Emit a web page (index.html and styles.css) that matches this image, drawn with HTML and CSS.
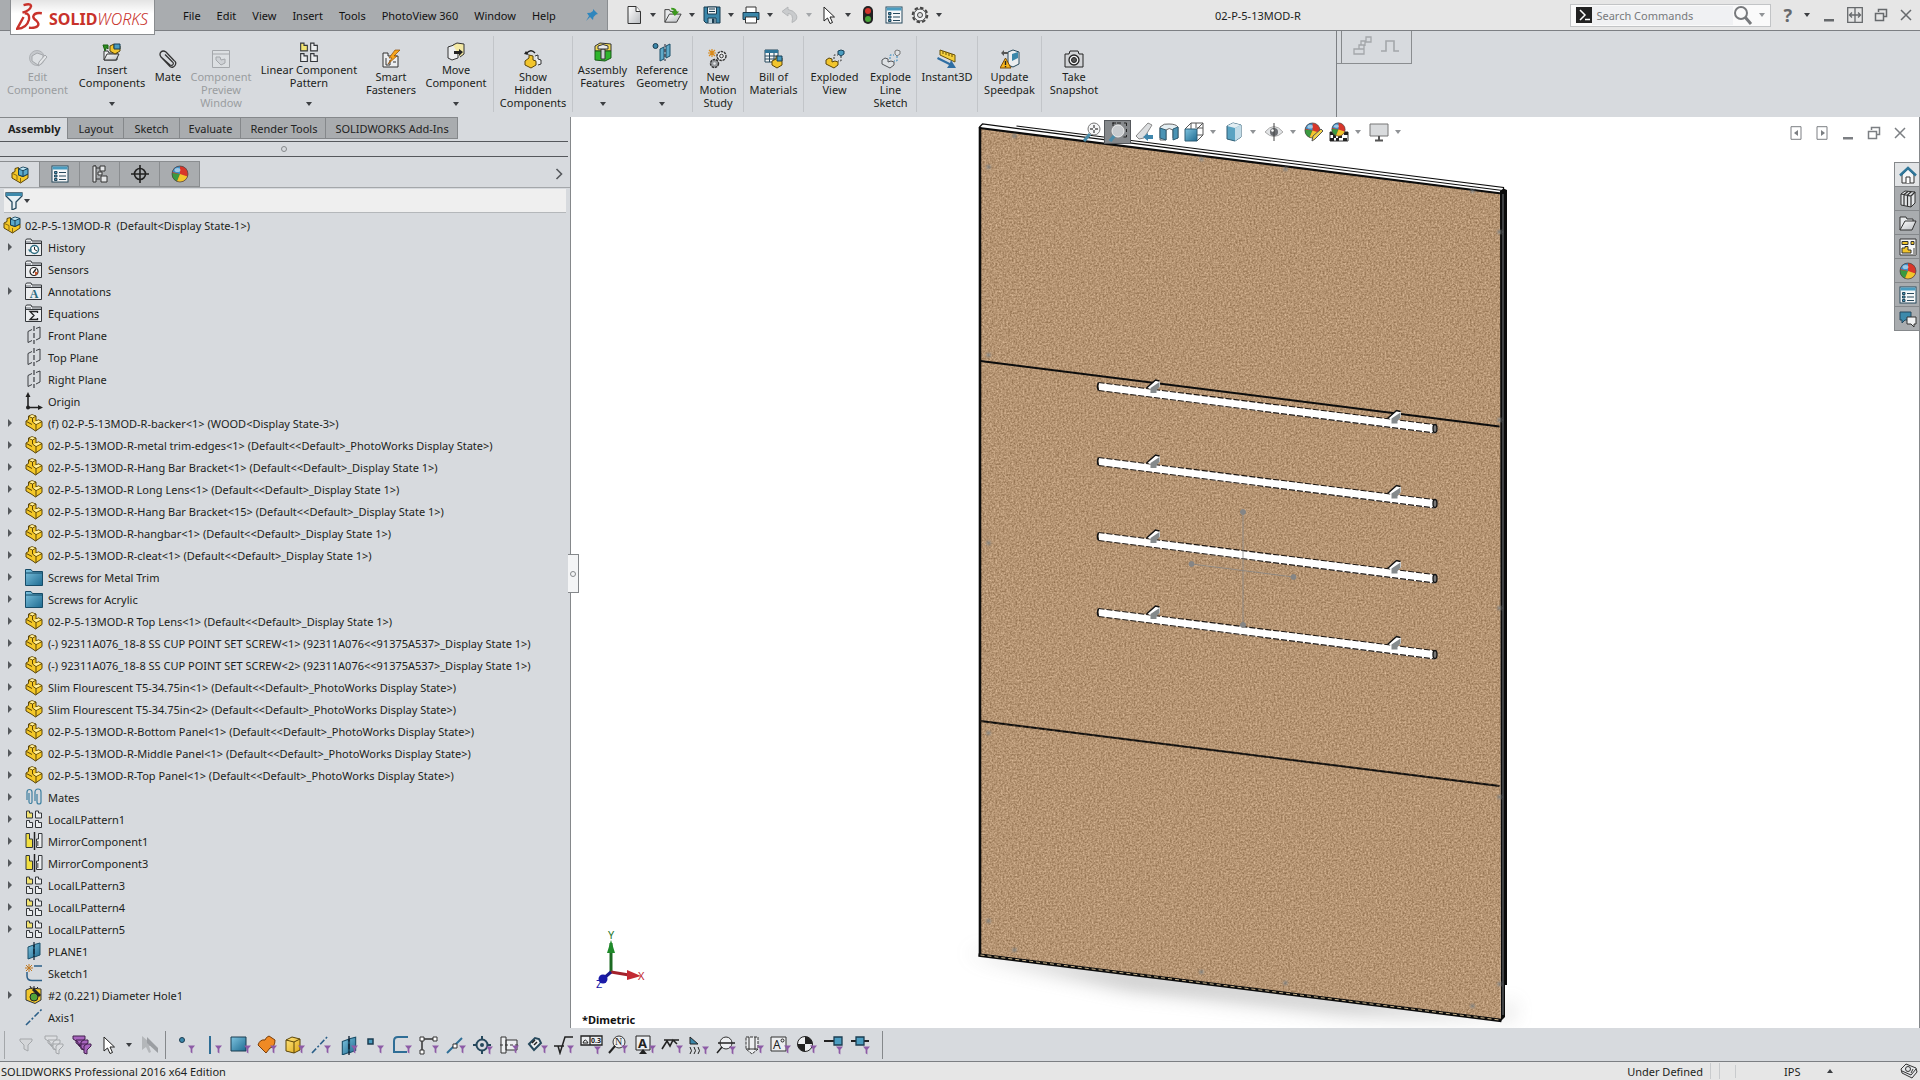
FILE: index.html
```html
<!DOCTYPE html>
<html lang="en">
<head>
<meta charset="utf-8">
<title>02-P-5-13MOD-R - SOLIDWORKS</title>
<link rel="stylesheet" href="styles.css">
</head>
<body>
<svg class="defs" aria-hidden="true">
<defs>
<linearGradient id="blue" x1="0" y1="0" x2="1" y2="1"><stop offset="0" stop-color="#7fc4e0"/><stop offset="1" stop-color="#1d6a90"/></linearGradient>
<linearGradient id="page" x1="0" y1="0" x2="1" y2="1"><stop offset="0" stop-color="#fff"/><stop offset="1" stop-color="#b9bcc0"/></linearGradient>
<linearGradient id="gold" x1="0" y1="0" x2="1" y2="1"><stop offset="0" stop-color="#ffe680"/><stop offset="1" stop-color="#e0a818"/></linearGradient>
<symbol id="part" viewBox="0 0 18 18"><path d="M3.500 5.500V2l3.500-1.300L11 2v5l2.500-1.200L17 7.500v5L10.500 17 7 14.500 1 11V7z" fill="#f4c828" stroke="#5b4508"/><path d="M4 2.500 7.500 4v4L11 10.500 17 7.500M7.500 4 11 2M11 10.500V17M1.500 7.500 7 10.500" fill="none" stroke="#5b4508"/><path d="M7 1 10 2 7.500 3.500 4.500 2.300zM8.500 8 13.500 6.500 16 7.500 11.200 10z" fill="#fff0a0"/></symbol>
<symbol id="assembly" viewBox="0 0 18 18"><path d="M1 7 4 5.500V2.500L7.500 1.500V9L12 10.500 17 8V12L9.500 17 1 12z" fill="#f4c828" stroke="#5b4508"/><path d="M1.500 7.500 6 9.500V14M9.500 12v5" fill="none" stroke="#8b6a10"/><path d="M7.500 3 12 1l5 1.500V8L12 10.500 7.500 9z" fill="#5aa9cb" stroke="#173f56"/><path d="M7.500 3 12 4.500 17 2.500M12 4.500v6" fill="none" stroke="#173f56"/><path d="M8.500 3 12 1.600l3.700 1L12 4z" fill="#c4e6f2"/></symbol>
<symbol id="folderbox" viewBox="0 0 18 18"><path d="M.5 17.500V2.500L1.500 1H6l1 2h9.500V17.500z" fill="#eceef0" stroke="#33363a"/><path d="M.5 5.500h16" stroke="#33363a"/><path d="M1 3h5v2H1zM7 4h9v1H7z" fill="#a9adb2"/></symbol>
<symbol id="history" viewBox="0 0 18 18"><use href="#folderbox"/><circle cx="9.500" cy="11.500" r="4" fill="#fff" stroke="#2d6c80" stroke-width="1.500"/><path d="M9.500 9v2.500L12 13" fill="none" stroke="#222"/><path d="M3 11.500h4L5 14.500z" fill="#2d6c80"/></symbol>
<symbol id="sensors" viewBox="0 0 18 18"><use href="#folderbox"/><circle cx="9" cy="11.500" r="4" fill="#fff" stroke="#222" stroke-width="1.200"/><path d="M8 13 11 9" stroke="#222" stroke-width="1.300"/><path d="M10 15.500a4 4 0 0 0 3-3l-3-1z" fill="#c8552c"/></symbol>
<symbol id="annot" viewBox="0 0 18 18"><use href="#folderbox"/><text x="9" y="16" text-anchor="middle" font-family="Liberation Serif, serif" font-size="12" font-weight="700" fill="#2d6c80">A</text></symbol>
<symbol id="equations" viewBox="0 0 18 18"><use href="#folderbox"/><path d="M12.500 9V7.500H5l4 4-4 4h7.500V14" fill="none" stroke="#222" stroke-width="1.300"/></symbol>
<symbol id="plane" viewBox="0 0 18 18"><path d="M7 3.500 3 5.500v11l4-2M11 2.500 15 1v11l-4 2" fill="none" stroke="#3a3d41"/><path d="M9 0v18" stroke="#3a3d41" stroke-width="1.200" stroke-dasharray="5 2"/></symbol>
<symbol id="planeblue" viewBox="0 0 18 18"><path d="M3 5 8.500 3v12L3 17zM9.500 2.500 15 1v12l-5.500 2z" fill="url(#blue)" stroke="#1b4f69"/><path d="M9 0v18" stroke="#123" stroke-width="1.200" stroke-dasharray="5 2"/></symbol>
<symbol id="origin" viewBox="0 0 18 18"><path d="M3 3v12.500h12" fill="none" stroke="#222" stroke-width="1.600"/><path d="M3 0 5.500 5H.5zM18 15.500 13 13v5z" fill="#222"/><circle cx="3" cy="15.500" r="2" fill="#222"/></symbol>
<symbol id="folderblue" viewBox="0 0 18 18"><path d="M.5 17.500V1.500H6L7.500 3.500h10v14z" fill="url(#blue)" stroke="#174c68"/><path d="M1 5h16" stroke="#174c68"/></symbol>
<symbol id="mates" viewBox="0 0 18 18"><path d="M2 12V4a2.500 2.500 0 0 1 5 0v10a1.500 1.500 0 0 1-3 0V5M10 13V4a3 3 0 0 1 6 0v10a2 2 0 0 1-4 0V6" fill="none" stroke="#3d7fa0" stroke-width="1.200"/></symbol>
<symbol id="pattern" viewBox="0 0 18 18"><g stroke="#33363a" fill="#eceef0"><path d="M1.500 1h3v2h3v5h-6z" fill="#f2e472"/><path d="M10.500 1h3v2h3v5h-6zM1.500 10.500h3v2h3v5h-6zM10.500 10.500h3v2h3v5h-6z"/></g></symbol>
<symbol id="mirror" viewBox="0 0 18 18"><path d="M1 1.500h3.500V7H7.500v8.500H1z" fill="#f2e040" stroke="#33363a"/><path d="M17 1.500h-3.500V7h-2v8.500H17z" fill="#eceef0" stroke="#33363a"/><path d="M11.500 9h2v5h-2z" fill="#777"/><path d="M9.500 0v18" stroke="#222" stroke-width="1.500"/></symbol>
<symbol id="sketch" viewBox="0 0 18 18"><path d="M9 2h8M2 8v4q0 4.500 5 4.500h10" fill="none" stroke="#2b5f88" stroke-width="1.500"/><path d="M4 0v8M0 4h8M1 1l6 6M7 1 1 7" stroke="#c07820"/></symbol>
<symbol id="hole" viewBox="0 0 18 18"><path d="M1 4 6 2l10 1v11l-6 3.500L1 14z" fill="#f0c62c" stroke="#33363a"/><circle cx="9" cy="11" r="4" fill="#51a33a" stroke="#222"/><path d="m8 3 7 7" stroke="#222" stroke-width="3"/><path d="m5 0 1.500 3M9 0v3M13 1l-2 2" stroke="#222"/></symbol>
<symbol id="axis" viewBox="0 0 18 18"><path d="M1 17 17 1" stroke="#2b5f88" stroke-width="1.600" stroke-dasharray="6 2 2 2"/></symbol>
<symbol id="ball" viewBox="0 0 18 18"><circle cx="9" cy="9" r="8" fill="#d8362a"/><path d="M9 9V1a8 8 0 0 0-7.800 6z" fill="#3c8fc8"/><path d="M9 9 1 8a8 8 0 0 0 5 8.400z" fill="#3a9a40"/><path d="M9 9 6 16.400a8 8 0 0 0 10.500-5z" fill="#f2c52c"/><ellipse cx="6.500" cy="5" rx="3" ry="2" fill="#fff" opacity=".5"/><circle cx="9" cy="9" r="8" fill="none" stroke="#444" stroke-width=".7"/></symbol>
<symbol id="list" viewBox="0 0 18 18"><rect x="1" y="1" width="16" height="16" fill="#f6f7f8" stroke="#26485c"/><path d="M1.500 1.500h15v3h-15z" fill="#4a9cc0"/><path d="M3.500 6.500h2.500v2H3.500zM3.500 10h2.500v2H3.500zM3.500 13.500h2.500v2H3.500z" fill="#4a9cc0" stroke="#26485c"/><path d="M8 7.500h7M8 11h7M8 14.500h7" stroke="#26485c"/></symbol>
<symbol id="config" viewBox="0 0 18 18"><path d="M4 0v17M4 3h5M4 14h5M8 9h3" fill="none" stroke="#333"/><path d="M2 1h3v16H2zM9 1h5v5H9zM10 11h6v6h-6zM7 7h4v3H7z" fill="#e4e6e8" stroke="#333"/></symbol>
<symbol id="target" viewBox="0 0 18 18"><circle cx="9" cy="9" r="5.500" fill="none" stroke="#222" stroke-width="1.600"/><path d="M9 0v18M0 9h18" stroke="#222" stroke-width="1.600"/></symbol>
<symbol id="funnel" viewBox="0 0 18 18"><path d="M1 1h16v3l-6 6v6l-4 2v-8L1 4z" fill="#e8f0f4" stroke="#24495e" stroke-width="1.300"/><path d="M1 1h16v3H1z" fill="#3d8aac"/></symbol>
<symbol id="new" viewBox="0 0 18 18"><path d="M3 .5h8l4.500 5v12H3z" fill="url(#page)" stroke="#333"/><path d="M11 .5V5.500h4.500" fill="#fff" stroke="#333"/></symbol>
<symbol id="open" viewBox="0 0 20 18"><path d="M1 17V3h5l1 2h7v4" fill="#e7e9eb" stroke="#333"/><path d="M1 17 6 8h13l-5 9z" fill="url(#page)" stroke="#333"/><path d="M8 1q6 0 6 4h3l-5 5-4-5h3q0-2-3-2z" fill="#3c9a1e"/></symbol>
<symbol id="save" viewBox="0 0 18 18"><path d="M1 1h16v16H3l-2-2z" fill="#3b87aa" stroke="#1b3c50"/><path d="M4.500 1h9v7h-9z" fill="#eef2f4" stroke="#1b3c50"/><path d="M6 3h6M6 5.500h6M5 17v-5h8v5" stroke="#1b3c50" fill="#b6cfda"/><path d="M9 12.500h2.500V17H9z" fill="#1b3c50"/></symbol>
<symbol id="print" viewBox="0 0 18 18"><path d="M4 7V1h10v6" fill="#fff" stroke="#333"/><path d="M1 6.500h16v7H1z" fill="#3b87aa" stroke="#1b3c50"/><path d="M3.500 11h11v6h-11z" fill="#fff" stroke="#333"/></symbol>
<symbol id="undo" viewBox="0 0 18 18"><path d="M7 1 1 5.500 7 10V7.500q6 0 4 9 7-3 4-8-2-4-8-5z" fill="#c9cbcd" stroke="#b5b7b9"/></symbol>
<symbol id="cursor" viewBox="0 0 12 18"><path d="M1 1v14l3.500-3 2.500 5.500 2.500-1L7 11h4.500z" fill="#fff" stroke="#222"/></symbol>
<symbol id="traffic" viewBox="0 0 18 18"><rect x="4" y="0" width="10" height="18" rx="5" fill="#222"/><circle cx="9" cy="5" r="3" fill="#d3342c"/><circle cx="9" cy="13" r="3" fill="#4aa63a"/></symbol>
<symbol id="gear" viewBox="0 0 18 18"><circle cx="9" cy="9" r="7.300" fill="none" stroke="#444" stroke-width="2" stroke-dasharray="3.500 2.200"/><circle cx="9" cy="9" r="6" fill="#f0f1f2" stroke="#444"/><circle cx="9" cy="9" r="2.500" fill="#e4e5e6" stroke="#444"/></symbol>
<symbol id="pin" viewBox="0 0 14 14"><path d="m8 1 5 5-2 .5-2.500 2.500L8 12 5 9 1 13l3-5-2-3 3.500-.3L8 3z" fill="#2f86bd"/></symbol>
<symbol id="clip" viewBox="0 0 20 20"><path d="m4 9 8 8.500q3 2 5-1t-1-5L8 3Q5 1 3 3T3 8l9 8q2 1 3-.5t-.5-2.500L7 5.500" fill="none" stroke="#333" stroke-width="1.300"/></symbol>
<symbol id="editcomp" viewBox="0 0 20 20"><circle cx="9" cy="9" r="7.500" fill="#c5c8cc" stroke="#b0b3b7"/><path d="M4 12V7l5-3 6 2v6l-5 4z" fill="#dde0e3" stroke="#a4a7ab"/><path d="m10 17 1-4 6-7 2 2-6 7z" fill="#e4e6e8" stroke="#a4a7ab"/></symbol>
<symbol id="insert" viewBox="0 0 20 20"><path d="M2 18V9h4l1 2h8v7z" fill="#eceef0" stroke="#333"/><path d="m2 18 3-6h12l-3 6z" fill="url(#page)" stroke="#333"/><path d="M1 3h5v4L4.500 5.500 3 9Z" fill="#2d9020" stroke="#1b6012"/><path d="M8 4l4-2v4l6-2v5l-5 3-5-3z" fill="#f2c52c" stroke="#5b4508"/><path d="M12 2h6v5h-6z" fill="#4a9cc0" stroke="#173f56"/></symbol>
<symbol id="preview" viewBox="0 0 20 20"><path d="M1.500 1.500h17v17h-17zM1.500 5h17" fill="#dcdfe2" stroke="#a4a7ab"/><path d="M5 11V8h4l1 3 4-1v4l-4 2z" fill="#cfd2d6" stroke="#a4a7ab"/></symbol>
<symbol id="fasten" viewBox="0 0 20 20"><path d="M2 18V4h5v3h10v11z" fill="#eceef0" stroke="#333"/><path d="M5 9v7h4v-5M12 13h3" fill="none" stroke="#333"/><path d="m14 1-6 8h3l-4 6 9-8h-3l6-6z" fill="#f7a51c" stroke="#8a4a08" stroke-width=".7"/></symbol>
<symbol id="move" viewBox="0 0 20 20"><path d="M2 5 8 3l4 1v12l-6 2-4-2z" fill="#eceef0" stroke="#333"/><path d="m7 3 4-2 7 1v10l-4 3" fill="#f4e9a4" stroke="#333"/><path d="M8 9h5V7l4 3-4 4v-2H8z" fill="#222"/></symbol>
<symbol id="show" viewBox="0 0 20 20"><path d="M2 12 6 9v-3l4 1v4l3 1v4l-5 3-6-3z" fill="#f2c52c" stroke="#5b4508"/><path d="M12 7l3-1v4l3 1v4l-3 1" fill="#eceef0" stroke="#333"/><path d="M3 5q5-6 9-1" fill="none" stroke="#222" stroke-width="1.300"/><path d="m1 5 5 1-3-4z" fill="#222"/></symbol>
<symbol id="asmfeat" viewBox="0 0 20 20"><path d="M2 4 7 1l11 1v7H2z" fill="#f0d957" stroke="#333"/><path d="M2 9h16v7l-6 3-10-1z" fill="#2fb52c" stroke="#1a5a18"/><path d="M8 7h4v10H8z" fill="#cfd2d6" stroke="#333"/><path d="M5 4q5-3 10 0v3H5z" fill="#e8eaec" stroke="#333"/></symbol>
<symbol id="refgeo" viewBox="0 0 20 20"><circle cx="3.500" cy="4" r="2.500" fill="#3b87aa" stroke="#1b3c50"/><path d="m8 7 4-2v12l-4 2zM14 4l4-2v12l-4 2z" fill="#5fa9c9" stroke="#1b4f69"/><path d="M13 2v17" stroke="#223" stroke-dasharray="3 2"/></symbol>
<symbol id="motion" viewBox="0 0 20 20"><path d="M4 0v8M0 4h8M1 1l6 6M7 1 1 7" stroke="#d88a1c" stroke-width="1.200"/><circle cx="13.500" cy="7" r="4.500" fill="#eceef0" stroke="#333" stroke-width="1.400" stroke-dasharray="2.500 .8"/><circle cx="13.500" cy="7" r="1.800" fill="none" stroke="#333"/><circle cx="6.500" cy="14.500" r="4" fill="#999ca0" stroke="#333" stroke-width="1.400" stroke-dasharray="2.500 .8"/><circle cx="6.500" cy="14.500" r="1.200" fill="#e4e6e8"/></symbol>
<symbol id="bom" viewBox="0 0 20 20"><path d="M1 1h13v12H1z" fill="#f4f5f6" stroke="#26485c"/><path d="M1 1h13v3H1z" fill="#2f7699"/><path d="M1 7h13M1 10h13M5.500 4v9M10 4v9" stroke="#26485c"/><path d="m8 12 4-2V7l6 2v7l-5 3-5-3z" fill="#f2c52c" stroke="#5b4508"/><path d="M13 7h5v5h-5z" fill="#4a9cc0" stroke="#173f56"/></symbol>
<symbol id="explode" viewBox="0 0 20 20"><path d="M1 11 4 9l3 1v3l3-1 3 1v3l-4 3-8-4z" fill="#f2c52c" stroke="#5b4508"/><path d="m13 2 3-1 3 1v3l-3 2-3-2z" fill="#4a9cc0" stroke="#173f56"/><path d="M9 10V6h4M16 7v5h-3" fill="none" stroke="#333" stroke-dasharray="2 1.500"/></symbol>
<symbol id="expline" viewBox="0 0 20 20"><path d="M1 11 4 9l3 1v3l3-1 3 1v3l-4 3-8-4z" fill="#dfe2e5" stroke="#55585c"/><path d="m14 2 2-1 3 1v3l-3 2-2-2z" fill="#dfe2e5" stroke="#777"/><path d="M9 10V6h4M16 7v5h-3" fill="none" stroke="#2f86bd" stroke-dasharray="2 1.500"/></symbol>
<symbol id="instant" viewBox="0 0 20 20"><path d="m3 1 15 5v7L3 6z" fill="#f4cf3c" stroke="#6b5208"/><path d="M6 2v3M9 3v3M12 4v3M15 5v3" stroke="#6b5208"/><path d="m0 10 1-2 12 6 1-3 5 8h-9l2-3z" fill="#2f6ea3"/></symbol>
<symbol id="speedpak" viewBox="0 0 20 20"><path d="m8 3 5-2 6 2v12l-6 3-5-2z" fill="#eceef0" stroke="#26485c"/><path d="m12 5 6-2v6l-6 3z" fill="#3b87aa"/><path d="M4 1 1 4l3 3V5h4V3H4z" fill="#555"/><path d="m5.500 9 5.500 10H0z" fill="#f7b51c" stroke="#7a4a08"/><path d="M5.500 12v4M5.500 17v1.300" stroke="#222" stroke-width="1.400"/></symbol>
<symbol id="camera" viewBox="0 0 20 20"><path d="M1 5h4l1-3h8l1 3h4v13H1z" fill="#d2d4d7" stroke="#222"/><circle cx="10" cy="11" r="5" fill="#f0f1f2" stroke="#222" stroke-width="1.300"/><circle cx="10" cy="11" r="2.500" fill="#555" stroke="#222"/></symbol>
<symbol id="glass" viewBox="0 0 20 20"><circle cx="8" cy="8" r="6" fill="none" stroke="#77797c" stroke-width="2"/><path d="m12 12 6 7" stroke="#77797c" stroke-width="3"/></symbol>
<symbol id="cube" viewBox="0 0 20 20"><path d="m3 4 6-3 8 2v12l-6 4-8-2z" fill="#5aa3c2" stroke="#2e5d74"/><path d="m3 4 8 2 6-3-8-2z" fill="#e2edf2"/><path d="M11 6v13l6-4V3z" fill="#c2dce8"/></symbol>
<symbol id="wirecube" viewBox="0 0 20 20"><path d="M7 7V1h12v12h-6M1 7l6-6M13 7l6-6M13 19l6-6M12 1v5M19 6h-6" fill="none" stroke="#555"/><path d="M1 7h12v12H1z" fill="url(#blue)" stroke="#2e5d74"/></symbol>
<symbol id="eye" viewBox="0 0 20 20"><path d="M1 10q9-11 18 0-9 9-18 0z" fill="#e2e4e6" stroke="#aaa"/><circle cx="10" cy="10" r="4" fill="#6b6e72"/><path d="M10 1v18" stroke="#444"/><circle cx="8.500" cy="8.500" r="1.300" fill="#fff"/></symbol>
<symbol id="monitor" viewBox="0 0 20 20"><path d="M1 2h18v12H1z" fill="#d9dbdd" stroke="#777"/><path d="M10 14v4M6 18.500h8" stroke="#555" stroke-width="2"/></symbol>
<symbol id="zoomfit" viewBox="0 0 20 20"><path d="M8 12 2 19" stroke="#4a8ba8" stroke-width="3"/><circle cx="12" cy="7" r="6" fill="#f4f5f6" stroke="#777"/><path d="M12 3v3M12 8v3M8 7h3M13 7h3" stroke="#555" stroke-width="1.400"/></symbol>
<symbol id="zoomarea" viewBox="0 0 20 20"><path d="M6 1H4M9 1h4M16 1h2.500v3M18.500 7v3M18.500 13v2h-3M8 1H5v3" fill="none" stroke="#222"/><path d="m7 13-5 6" stroke="#4a8ba8" stroke-width="3.500"/><circle cx="10" cy="9" r="6" fill="#c8cbce" stroke="#eee"/></symbol>
<symbol id="prev" viewBox="0 0 20 20"><path d="M14 1l4 2-8 13-5 1-3-3z" fill="#dcdee0" stroke="#888"/><path d="M9 15l5-4v2h5v4h-5v2z" fill="#3f86ac"/></symbol>
<symbol id="section" viewBox="0 0 20 20"><path d="M1 5q4-4 9-3 7 0 9 3v11h-5V8q-4-3-7 0v10H1z" fill="#e4eef2" stroke="#666"/><path d="M1 6l6 2v10l-6-2zM14 7l5-2v11l-5 2z" fill="#4a93b4" stroke="#2e5d74"/></symbol>
<symbol id="scene" viewBox="0 0 20 20"><path d="M1 10h18v9H1z" fill="#fff" stroke="#333"/><path d="M1 10h4v3H1zM9 13h4v3H9zM15 10h4v3h-4zM4 13h3v3H4zM1 16h4v3H1zM7 16h3v3H7zM14 16h4v3h-4z" fill="#222"/><svg x="2" y="0" width="15" height="15"><use href="#ball"/></svg></symbol>
<symbol id="appear" viewBox="0 0 20 20"><svg x="0" y="0" width="17" height="17"><use href="#ball"/></svg><path d="m8 19 1-5 8-7 2 2-8 8z" fill="#f4d34c" stroke="#555"/></symbol>
<symbol id="pf" viewBox="0 0 8 9"><path d="M0 0h8L5 3.500V9L3 7.500v-4z" fill="#8d5ba6"/></symbol>
<symbol id="restore" viewBox="0 0 14 14"><path d="M4.500 4V1.500h8v7H10M1.500 5.500h8v7h-8z" fill="none" stroke="currentColor" stroke-width="1.500"/></symbol>
<symbol id="close" viewBox="0 0 14 14"><path d="m2 2 10 10M12 2 2 12" stroke="currentColor" stroke-width="1.500"/></symbol>
<symbol id="min" viewBox="0 0 14 14"><path d="M2 11h10v2.500H2z" fill="currentColor"/></symbol>
<symbol id="mark" viewBox="-5 -5 10 10"><path d="M0-4V4M-4 0H4M-3-3 3 3M3-3-3 3" stroke="#7c8284" stroke-width="1"/></symbol>
</defs>
</svg>
<div class="app">
<header class="titlebar">
 <nav class="menus">
  <a class="menu" href="#">File</a><a class="menu" href="#">Edit</a><a class="menu" href="#">View</a><a class="menu" href="#">Insert</a><a class="menu" href="#">Tools</a><a class="menu" href="#">PhotoView 360</a><a class="menu" href="#">Window</a><a class="menu" href="#">Help</a>
  <button class="bare pin" aria-label="Pin menu"><svg class="i14"><use href="#pin"/></svg></button>
 </nav>
 <div class="quick">
  <button class="split"><svg class="i18"><use href="#new"/></svg><i class="caret"></i></button>
  <button class="split"><svg class="i18"><use href="#open"/></svg><i class="caret"></i></button>
  <button class="split"><svg class="i18"><use href="#save"/></svg><i class="caret"></i></button>
  <button class="split"><svg class="i18"><use href="#print"/></svg><i class="caret"></i></button>
  <button class="split faded"><svg class="i18"><use href="#undo"/></svg><i class="caret"></i></button>
  <button class="split"><svg class="i18"><use href="#cursor"/></svg><i class="caret"></i></button>
  <button class="bare solo"><svg class="i18"><use href="#traffic"/></svg></button>
  <button class="bare solo"><svg class="i18"><use href="#list"/></svg></button>
  <button class="split"><svg class="i18"><use href="#gear"/></svg><i class="caret"></i></button>
 </div>
 <h1 class="doc">02-P-5-13MOD-R</h1>
 <div class="title-end">
  <form class="search"><svg class="i16" viewBox="0 0 16 16"><path d="M0 0h16v16H0z" fill="#222"/><path d="m4 3 5 5-5 5M9 12.500h5" fill="none" stroke="#fff" stroke-width="1.500"/></svg><input type="text" aria-label="Search Commands" placeholder="Search Commands"><button class="bare" type="button" aria-label="Search"><svg class="i20"><use href="#glass"/></svg></button><i class="caret soft"></i></form>
  <button class="help">?<i class="caret"></i></button>
  <div class="winbtns wide"><button class="bare"><svg class="i14"><use href="#min"/></svg></button><button class="bare"><svg class="i16" viewBox="0 0 16 16"><path d="M.7.700h14.600v14.600H.7zM8 0v16M3 8h10M5 5.500 2.500 8 5 10.500M11 5.500 13.500 8 11 10.500" fill="none" stroke="currentColor" stroke-width="1.300"/></svg></button><button class="bare"><svg class="i14"><use href="#restore"/></svg></button><button class="bare"><svg class="i14"><use href="#close"/></svg></button></div>
 </div>
 <div class="logo"><svg class="ds" viewBox="0 0 26 26"><g fill="none" stroke="#c8322b" stroke-width="2.200"><path d="M7 2q7-2 7 1-1 4-8 6"/><path d="M8 9.500q5 0 4 6-2 8-11 8.500L7 13"/><path d="M24 9.500q-7-1-8 3 0 2 3 4 3 3 1 5t-8 1.500"/></g></svg><span class="logo-text"><b>SOLID</b><em>WORKS</em></span></div>
</header>

<div class="ribbon-row">
 <div class="ribbon">
  <button class="cmd faded"><svg class="i20"><use href="#editcomp"/></svg><span>Edit<br>Component</span></button>
  <button class="cmd drop"><svg class="i20"><use href="#insert"/></svg><span>Insert<br>Components</span><i class="caret"></i></button>
  <button class="cmd"><svg class="i20"><use href="#clip"/></svg><span>Mate</span></button>
  <button class="cmd faded"><svg class="i20"><use href="#preview"/></svg><span>Component<br>Preview<br>Window</span></button>
  <button class="cmd drop"><svg class="i20"><use href="#pattern"/></svg><span>Linear Component<br>Pattern</span><i class="caret"></i></button>
  <button class="cmd"><svg class="i20"><use href="#fasten"/></svg><span>Smart<br>Fasteners</span></button>
  <button class="cmd drop end"><svg class="i20"><use href="#move"/></svg><span>Move<br>Component</span><i class="caret"></i></button>
  <button class="cmd end"><svg class="i20"><use href="#show"/></svg><span>Show<br>Hidden<br>Components</span></button>
  <button class="cmd drop"><svg class="i20"><use href="#asmfeat"/></svg><span>Assembly<br>Features</span><i class="caret"></i></button>
  <button class="cmd drop end"><svg class="i20"><use href="#refgeo"/></svg><span>Reference<br>Geometry</span><i class="caret"></i></button>
  <button class="cmd end"><svg class="i20"><use href="#motion"/></svg><span>New<br>Motion<br>Study</span></button>
  <button class="cmd end"><svg class="i20"><use href="#bom"/></svg><span>Bill of<br>Materials</span></button>
  <button class="cmd"><svg class="i20"><use href="#explode"/></svg><span>Exploded<br>View</span></button>
  <button class="cmd end"><svg class="i20"><use href="#expline"/></svg><span>Explode<br>Line<br>Sketch</span></button>
  <button class="cmd end"><svg class="i20"><use href="#instant"/></svg><span>Instant3D</span></button>
  <button class="cmd end"><svg class="i20"><use href="#speedpak"/></svg><span>Update<br>Speedpak</span></button>
  <button class="cmd"><svg class="i20"><use href="#camera"/></svg><span>Take<br>Snapshot</span></button>
 </div>
 <div class="floatbar"><svg class="i20" viewBox="0 0 20 20"><path d="M1 13h5v-4h5v4M1 13v5h10v-5zM8 9V5h4v5M13 1h5v5h-5z" fill="none" stroke="#a4a7aa" stroke-width="1.300"/></svg><svg class="i20" viewBox="0 0 20 20"><path d="M1 15h5V5h8v10h5" fill="none" stroke="#a4a7aa" stroke-width="1.600"/></svg></div>
</div>

<main class="work">
 <aside class="side">
  <div class="tabs"><button class="tab active">Assembly</button><button class="tab">Layout</button><button class="tab">Sketch</button><button class="tab snug">Evaluate</button><button class="tab snug">Render Tools</button><button class="tab snug">SOLIDWORKS Add-Ins</button></div>
  <div class="gripbar"><i class="dot"></i></div>
  <div class="mgr"><button class="mtab active" aria-label="Feature tree"><svg class="i18"><use href="#assembly"/></svg></button><button class="mtab" aria-label="Properties"><svg class="i18"><use href="#list"/></svg></button><button class="mtab" aria-label="Configurations"><svg class="i18"><use href="#config"/></svg></button><button class="mtab" aria-label="Dimensions"><svg class="i18"><use href="#target"/></svg></button><button class="mtab" aria-label="Display"><svg class="i18"><use href="#ball"/></svg></button><svg class="chev" viewBox="0 0 8 12"><path d="m1.500 1 5 5-5 5" fill="none" stroke="#55585c" stroke-width="1.600"/></svg></div>
  <div class="filter"><svg class="i18"><use href="#funnel"/></svg><i class="caret"></i><input type="text" aria-label="Filter tree"></div>
  <ul class="tree">
   <li class="root"><svg class="i18"><use href="#assembly"/></svg>02-P-5-13MOD-R&nbsp; (Default&lt;Display State-1&gt;)</li>
   <li class="kids"><svg class="i18"><use href="#history"/></svg>History</li>
   <li><svg class="i18"><use href="#sensors"/></svg>Sensors</li>
   <li class="kids"><svg class="i18"><use href="#annot"/></svg>Annotations</li>
   <li><svg class="i18"><use href="#equations"/></svg>Equations</li>
   <li><svg class="i18"><use href="#plane"/></svg>Front Plane</li>
   <li><svg class="i18"><use href="#plane"/></svg>Top Plane</li>
   <li><svg class="i18"><use href="#plane"/></svg>Right Plane</li>
   <li><svg class="i18"><use href="#origin"/></svg>Origin</li>
   <li class="kids"><svg class="i18"><use href="#part"/></svg>(f) 02-P-5-13MOD-R-backer&lt;1&gt; (WOOD&lt;Display State-3&gt;)</li>
   <li class="kids"><svg class="i18"><use href="#part"/></svg>02-P-5-13MOD-R-metal trim-edges&lt;1&gt; (Default&lt;&lt;Default&gt;_PhotoWorks Display State&gt;)</li>
   <li class="kids"><svg class="i18"><use href="#part"/></svg>02-P-5-13MOD-R-Hang Bar Bracket&lt;1&gt; (Default&lt;&lt;Default&gt;_Display State 1&gt;)</li>
   <li class="kids"><svg class="i18"><use href="#part"/></svg>02-P-5-13MOD-R Long Lens&lt;1&gt; (Default&lt;&lt;Default&gt;_Display State 1&gt;)</li>
   <li class="kids"><svg class="i18"><use href="#part"/></svg>02-P-5-13MOD-R-Hang Bar Bracket&lt;15&gt; (Default&lt;&lt;Default&gt;_Display State 1&gt;)</li>
   <li class="kids"><svg class="i18"><use href="#part"/></svg>02-P-5-13MOD-R-hangbar&lt;1&gt; (Default&lt;&lt;Default&gt;_Display State 1&gt;)</li>
   <li class="kids"><svg class="i18"><use href="#part"/></svg>02-P-5-13MOD-R-cleat&lt;1&gt; (Default&lt;&lt;Default&gt;_Display State 1&gt;)</li>
   <li class="kids"><svg class="i18"><use href="#folderblue"/></svg>Screws for Metal Trim</li>
   <li class="kids"><svg class="i18"><use href="#folderblue"/></svg>Screws for Acrylic</li>
   <li class="kids"><svg class="i18"><use href="#part"/></svg>02-P-5-13MOD-R Top Lens&lt;1&gt; (Default&lt;&lt;Default&gt;_Display State 1&gt;)</li>
   <li class="kids"><svg class="i18"><use href="#part"/></svg>(-) 92311A076_18-8 SS CUP POINT SET SCREW&lt;1&gt; (92311A076&lt;&lt;91375A537&gt;_Display State 1&gt;)</li>
   <li class="kids"><svg class="i18"><use href="#part"/></svg>(-) 92311A076_18-8 SS CUP POINT SET SCREW&lt;2&gt; (92311A076&lt;&lt;91375A537&gt;_Display State 1&gt;)</li>
   <li class="kids"><svg class="i18"><use href="#part"/></svg>Slim Flourescent T5-34.75in&lt;1&gt; (Default&lt;&lt;Default&gt;_PhotoWorks Display State&gt;)</li>
   <li class="kids"><svg class="i18"><use href="#part"/></svg>Slim Flourescent T5-34.75in&lt;2&gt; (Default&lt;&lt;Default&gt;_PhotoWorks Display State&gt;)</li>
   <li class="kids"><svg class="i18"><use href="#part"/></svg>02-P-5-13MOD-R-Bottom Panel&lt;1&gt; (Default&lt;&lt;Default&gt;_PhotoWorks Display State&gt;)</li>
   <li class="kids"><svg class="i18"><use href="#part"/></svg>02-P-5-13MOD-R-Middle Panel&lt;1&gt; (Default&lt;&lt;Default&gt;_PhotoWorks Display State&gt;)</li>
   <li class="kids"><svg class="i18"><use href="#part"/></svg>02-P-5-13MOD-R-Top Panel&lt;1&gt; (Default&lt;&lt;Default&gt;_PhotoWorks Display State&gt;)</li>
   <li class="kids"><svg class="i18"><use href="#mates"/></svg>Mates</li>
   <li class="kids"><svg class="i18"><use href="#pattern"/></svg>LocalLPattern1</li>
   <li class="kids"><svg class="i18"><use href="#mirror"/></svg>MirrorComponent1</li>
   <li class="kids"><svg class="i18"><use href="#mirror"/></svg>MirrorComponent3</li>
   <li class="kids"><svg class="i18"><use href="#pattern"/></svg>LocalLPattern3</li>
   <li class="kids"><svg class="i18"><use href="#pattern"/></svg>LocalLPattern4</li>
   <li class="kids"><svg class="i18"><use href="#pattern"/></svg>LocalLPattern5</li>
   <li><svg class="i18"><use href="#planeblue"/></svg>PLANE1</li>
   <li><svg class="i18"><use href="#sketch"/></svg>Sketch1</li>
   <li class="kids"><svg class="i18"><use href="#hole"/></svg>#2 (0.221) Diameter Hole1</li>
   <li><svg class="i18"><use href="#axis"/></svg>Axis1</li>
  </ul>
  <button class="splitter" aria-label="Collapse panel"><i class="dot"></i></button>
 </aside>
 <section class="view">
  <svg class="scene" viewBox="571 117 1349 911" preserveAspectRatio="xMidYMid slice">
   <defs>
    <filter id="grain" x="0" y="0" width="1" height="1" color-interpolation-filters="sRGB"><feTurbulence type="fractalNoise" baseFrequency=".55" numOctaves="2" seed="4"/><feColorMatrix values=".4 0 0 0 .51  .4 0 0 0 .38  .4 0 0 0 .247  0 0 0 0 1"/><feComposite in2="SourceGraphic" operator="in"/></filter>
    <filter id="soft" x="-.2" y="-.5" width="1.400" height="2"><feGaussianBlur stdDeviation="10"/></filter>
    <g id="bar"><path d="M1099 382.500 1435 424.500v9L1099 390.500z" fill="#fff"/><path d="M1099 382.500 1435 424.500M1099 390.500 1435 433" fill="none" stroke="#1a1410" stroke-width="1.100" stroke-dasharray="6 2"/><path d="M1099 382.500q-2 4 0 8" fill="none" stroke="#111" stroke-width="1.500"/><ellipse cx="1435.500" cy="428.500" rx="2" ry="4" fill="#777" stroke="#111" stroke-width="1.300"/><g id="bk"><path d="M1148 387.500l8-7 4.500 1v5l-6 5z" fill="#fff"/><path d="m1147 388 9-8 4 1" fill="none" stroke="#111" stroke-width="1.500"/><path d="m1154 386 6-4v5l-3 3v3h-6v-5z" fill="#858a8c"/></g><use href="#bk" x="241" y="30.500"/></g>
   </defs>
   <path d="M1000 955 1502 1016 1512 1000 1512 1018 1350 1012 1130 988 965 952z" fill="#777" opacity=".5" filter="url(#soft)"/>
   <path d="M980 127 984 124 1504 187 1507 190V985l-2 1v31l-3 4-522-65z" fill="#fff"/>
   <path d="M981 128 1501 193V1021L981 956z" fill="#b59472"/>
   <path d="M981 128 1501 193V1021L981 956z" filter="url(#grain)"/>
   <path d="M1500.500 191 1504 188.500 1507.500 190V985h-2v32l-4 4z" fill="#0c0c0c"/>
   <path d="M1503.500 194V1015" stroke="#72777a"/>
   <g fill="none" stroke="#0c0c0c">
    <path d="M980 128.500V127l3-3L1503 190.500" stroke-width="1.200"/><path d="M1017 126 1504 187.500v3" stroke-width="1.200"/><path d="M980 128 1502 193.500" stroke-width="2.200"/><path d="M980.500 127V956" stroke-width="2.600"/>
    <path d="M981 361 1500 426.500" stroke-width="2"/><path d="M981 721 1500 786" stroke-width="2"/>
    <path d="M979 955 1502 1020.500" stroke-width="3.500"/>
   </g>
   <path d="M981 955 1500 1020" stroke="#c9b48c" stroke-dasharray="4 3"/><path d="M981 721 1500 786" stroke="#70553a" stroke-width=".6" stroke-dasharray="3 5"/>
   <use href="#bar"/><use href="#bar" y="75"/><use href="#bar" y="150"/><use href="#bar" y="226"/>
   <g stroke="#858585" fill="#858585"><path d="M1243.500 512V625M1192 564 1294 577" opacity=".8"/><circle cx="1243.500" cy="512" r="2.500"/><circle cx="1243.500" cy="625" r="2.500"/><circle cx="1192" cy="564" r="2.500"/><circle cx="1294" cy="577" r="2.500"/></g>
   <g class="marks">
    <use href="#mark" x="1011" y="132" width="8" height="8"/><use href="#mark" x="985" y="163" width="8" height="8"/><use href="#mark" x="1198" y="155" width="8" height="8"/><use href="#mark" x="1282" y="165" width="8" height="8"/><use href="#mark" x="1469" y="187" width="8" height="8"/><use href="#mark" x="1496" y="228" width="8" height="8"/><use href="#mark" x="985" y="351" width="8" height="8"/><use href="#mark" x="1496" y="416" width="8" height="8"/><use href="#mark" x="985" y="539" width="8" height="8"/><use href="#mark" x="1496" y="604" width="8" height="8"/><use href="#mark" x="985" y="729" width="8" height="8"/><use href="#mark" x="1496" y="793" width="8" height="8"/><use href="#mark" x="985" y="917" width="8" height="8"/><use href="#mark" x="1011" y="946" width="8" height="8"/><use href="#mark" x="1198" y="968" width="8" height="8"/><use href="#mark" x="1282" y="979" width="8" height="8"/><use href="#mark" x="1469" y="1002" width="8" height="8"/><use href="#mark" x="1496" y="980" width="8" height="8"/>
   </g>
  </svg>
  <div class="heads">
   <button class="hud"><svg class="i20"><use href="#zoomfit"/></svg></button><button class="hud on"><svg class="i20"><use href="#zoomarea"/></svg></button><button class="hud"><svg class="i20"><use href="#prev"/></svg></button><button class="hud"><svg class="i20"><use href="#section"/></svg></button><button class="hud menued"><svg class="i20"><use href="#wirecube"/></svg><i class="caret soft"></i></button><button class="hud menued"><svg class="i20"><use href="#cube"/></svg><i class="caret soft"></i></button><button class="hud menued"><svg class="i20"><use href="#eye"/></svg><i class="caret soft"></i></button><button class="hud"><svg class="i20"><use href="#appear"/></svg></button><button class="hud menued"><svg class="i20"><use href="#scene"/></svg><i class="caret soft"></i></button><button class="hud menued"><svg class="i20"><use href="#monitor"/></svg><i class="caret soft"></i></button>
  </div>
  <div class="winbtns inner"><button class="bare"><svg class="i14" viewBox="0 0 14 14"><path d="M2 .7h10v12.600H2z" fill="none" stroke="currentColor"/><path d="M9 4v6L5 7z" fill="currentColor"/></svg></button><button class="bare"><svg class="i14" viewBox="0 0 14 14"><path d="M2 .7h10v12.600H2z" fill="none" stroke="currentColor"/><path d="M6 4v6l4-3z" fill="currentColor"/></svg></button><button class="bare"><svg class="i14"><use href="#min"/></svg></button><button class="bare"><svg class="i14"><use href="#restore"/></svg></button><button class="bare"><svg class="i14"><use href="#close"/></svg></button></div>
  <div class="taskpane">
   <button class="task active"><svg class="i18" viewBox="0 0 18 18"><path d="M3 9v8h12V9L9 3z" fill="#f4f5f6" stroke="#333"/><path d="M7 17v-6h4v6" fill="#fff" stroke="#333"/><path d="M1 9.500 9 2l8 7.500" fill="none" stroke="#2f7699" stroke-width="2.500"/></svg></button>
   <button class="task"><svg class="i18" viewBox="0 0 18 18"><path d="m2 4 4-3 10 1v11l-4 4-10-2z" fill="#e4e6e8" stroke="#333"/><path d="M5 5v10.500M8.500 5.500V16M12 6v11M2 4l10 2 4-4M5 4.500l4-3M8.500 5l4-3.500" fill="none" stroke="#333" stroke-width="1.200"/></svg></button>
   <button class="task"><svg class="i18" viewBox="0 0 18 18"><path d="M1 16V3h6l1 2h6v3" fill="#e8eaec" stroke="#333"/><path d="m1 16 5-9h11l-4 9z" fill="url(#page)" stroke="#333"/></svg></button>
   <button class="task"><svg class="i18" viewBox="0 0 18 18"><path d="M1 1h16v16H1z" fill="#f4f5f6" stroke="#333"/><path d="M3 3.500h6v3H3zM12 3.500h3v3h-3zM3 10h3v-1.500h3V12h3v3H3z" fill="#f2c52c" stroke="#333"/><path d="M14 10h3v7h-3z" fill="#999"/></svg></button>
   <button class="task"><svg class="i18"><use href="#ball"/></svg></button>
   <button class="task"><svg class="i18"><use href="#list"/></svg></button>
   <button class="task"><svg class="i18" viewBox="0 0 18 18"><path d="M1 2h11v8H6l-3 3v-3H1z" fill="#3d8aac" stroke="#24495e"/><path d="M8 7h9v7h-2v3l-3-3H8z" fill="#f0f1f2" stroke="#333"/></svg></button>
  </div>
  <div class="orient">
   <svg class="triad" viewBox="0 0 60 68"><path d="M20 17v29" stroke="#1c6a22" stroke-width="3"/><path d="m20 14 4 13h-8z" fill="#1f8a2a"/><path d="m20 46 18 3" stroke="#a3222b" stroke-width="3"/><path d="m50 50-14 4V44z" fill="#c22a33"/><path d="m20 46-8 7" stroke="#1a1a8c" stroke-width="3"/><circle cx="12" cy="53" r="4.500" fill="#1a1aa8"/><g font-family="Noto Sans, sans-serif" font-size="11"><text x="17" y="13" fill="#2a7a30">Y</text><text x="47" y="54" fill="#c22a33">X</text><text x="5" y="62" fill="#1a1aa8">Z</text></g></svg>
   <b class="viewname">*Dimetric</b>
  </div>
 </section>
</main>

<div class="filters">
 <div class="fgroup lead"><button class="bare"><svg class="i20" viewBox="0 0 20 20"><path d="M4 4h12v2l-4 4v6l-4-2v-4L4 6z" fill="#d4d6d9" stroke="#a4a7aa"/></svg></button><button class="bare"><svg class="i20" viewBox="0 0 20 20"><path d="M1 1h12v3l-4 3v4l-3-1V7L1 4zM4 5h12v3l-4 3v4l-3-1v-3L4 8zM7 9h12v2l-4 4v4l-3-1v-3l-5-4z" fill="#dcdee1" stroke="#a4a7aa"/></svg></button><button class="bare"><svg class="i20" viewBox="0 0 20 20"><path d="M1 1h12v3l-4 3v4l-3-1V7L1 4zM4 5h12v3l-4 3v4l-3-1v-3L4 8zM7 9h12v2l-4 4v4l-3-1v-3l-5-4z" fill="#a765bd" stroke="#43204f"/></svg></button><button class="bare"><svg class="i18"><use href="#cursor"/></svg></button><i class="caret"></i><button class="bare last"><svg class="i20" viewBox="0 0 20 20"><path d="M2 1v14l4-3 3 6 2-1-2-6h5z" fill="#b4b7ba"/><path d="M7 2l11 11v5L7 8z" fill="#9b9ea2"/></svg></button></div>
 <div class="fgroup kinds">
  <button class="fb"><svg viewBox="0 0 24 20"><circle cx="7" cy="5" r="2.500" fill="#3b87aa" stroke="#1b3c50"/><use href="#pf" x="13" y="10" width="7" height="9"/></svg></button>
  <button class="fb"><svg viewBox="0 0 24 20"><path d="M8 1v18" stroke="#2f6e96" stroke-width="2"/><use href="#pf" x="13" y="10" width="7" height="9"/></svg></button>
  <button class="fb"><svg viewBox="0 0 24 20"><path d="M2 2h15v14H2z" fill="url(#blue)" stroke="#1b3c50"/><use href="#pf" x="15" y="10" width="7" height="9"/></svg></button>
  <button class="fb"><svg viewBox="0 0 24 20"><path d="M2 10q2-6 7-5 1-3 4-4l6 4q0 7-5 8l-4 5-4-4z" fill="#f08a24" stroke="#7a3d08"/><use href="#pf" x="14" y="10" width="7" height="9"/></svg></button>
  <button class="fb"><svg viewBox="0 0 24 20"><path d="m3 5 6-3 8 2v11l-6 3-8-2z" fill="url(#gold)" stroke="#5b4508"/><path d="m3 5 8 2 6-3M11 7v11" fill="none" stroke="#5b4508"/><use href="#pf" x="15" y="10" width="7" height="9"/></svg></button>
  <button class="fb"><svg viewBox="0 0 24 20"><path d="M2 18 18 1" stroke="#2b5f88" stroke-width="1.600" stroke-dasharray="6 2 2 2"/><use href="#pf" x="14" y="10" width="7" height="9"/></svg></button>
  <button class="fb"><svg viewBox="0 0 24 20"><svg x="0" y="1" width="18" height="18"><use href="#planeblue"/></svg><use href="#pf" x="14" y="10" width="7" height="9"/></svg></button>
  <button class="fb"><svg viewBox="0 0 24 20"><path d="M4 4h5v5H4z" fill="#4a9cc0" stroke="#1b3c50" stroke-width="1.500"/><use href="#pf" x="13" y="10" width="7" height="9"/></svg></button>
  <button class="fb"><svg viewBox="0 0 24 20"><path d="M17 2H7Q3 2 3 6v11h13" fill="none" stroke="#2f6e96" stroke-width="2"/><use href="#pf" x="14" y="10" width="7" height="9"/></svg></button>
  <button class="fb"><svg viewBox="0 0 24 20"><path d="M4 17V4h13" fill="none" stroke="#333" stroke-width="1.500"/><path d="M2 2h4v4H2zM15 2h4v4h-4zM2 15h4v4H2z" fill="#fff" stroke="#333"/><use href="#pf" x="14" y="10" width="7" height="9"/></svg></button>
  <button class="fb"><svg viewBox="0 0 24 20"><path d="M2 18 17 3" stroke="#2f6e96" stroke-width="2"/><path d="M8 9h4v4H8z" fill="#fff" stroke="#333"/><use href="#pf" x="14" y="10" width="7" height="9"/></svg></button>
  <button class="fb"><svg viewBox="0 0 24 20"><circle cx="10" cy="10" r="5.500" fill="none" stroke="#26485c" stroke-width="2"/><circle cx="10" cy="10" r="2" fill="#26485c"/><path d="M10 1v4M10 15v4M1 10h4M15 10h4" stroke="#26485c" stroke-width="2"/><use href="#pf" x="14" y="11" width="7" height="9"/></svg></button>
  <button class="fb"><svg viewBox="0 0 24 20"><path d="M2 2h5v16H2zM7 5h11v10H7z" fill="#eceef0" stroke="#333"/><path d="M1 10h19" stroke="#333" stroke-dasharray="3 2"/><use href="#pf" x="13" y="10" width="7" height="9"/></svg></button>
  <button class="fb"><svg viewBox="0 0 24 20"><path d="m3 9 6-6 4 1 2 4-7 7z" fill="#eceef0" stroke="#26485c" stroke-width="2"/><path d="m6 8 3-3M8 10l3-3" stroke="#222" stroke-width="1.500"/><use href="#pf" x="15" y="10" width="7" height="9"/></svg></button>
  <button class="fb"><svg viewBox="0 0 24 20"><path d="M1 11h4l2 7 5-16h8M4 11h7" fill="none" stroke="#222" stroke-width="1.500"/><use href="#pf" x="14" y="10" width="7" height="9"/></svg></button>
  <button class="fb"><svg viewBox="0 0 24 20"><path d="M1 1h21v9H1zM10 1v9" fill="#eceef0" stroke="#222" stroke-width="1.300"/><path d="M3 8q2-6 5 0z" fill="none" stroke="#222"/><text x="11" y="8" font-family="Noto Sans, sans-serif" font-size="7" font-weight="700" fill="#222">0.3</text><use href="#pf" x="14" y="11" width="7" height="9"/></svg></button>
  <button class="fb"><svg viewBox="0 0 24 20"><circle cx="12" cy="7" r="6" fill="#eceef0" stroke="#333"/><text x="8" y="10" font-family="Liberation Serif, serif" font-size="10" fill="#222">N</text><path d="m8 11-6 7" stroke="#222" stroke-width="2"/><use href="#pf" x="14" y="10" width="7" height="9"/></svg></button>
  <button class="fb"><svg viewBox="0 0 24 20"><path d="M2 1h14v14H2z" fill="#eceef0" stroke="#222"/><text x="4" y="13" font-family="Noto Sans, sans-serif" font-size="13" font-weight="700" fill="#222">A</text><path d="m9 14 4 5H5z" fill="#222"/><use href="#pf" x="15" y="10" width="7" height="9"/></svg></button>
  <button class="fb"><svg viewBox="0 0 24 20"><path d="m1 14 5-8 3 5 3-6 4 4M3 5h15" fill="none" stroke="#222" stroke-width="1.600"/><use href="#pf" x="15" y="10" width="7" height="9"/></svg></button>
  <button class="fb"><svg viewBox="0 0 24 20"><path d="M2 2v7h8z" fill="#3b87aa" stroke="#222"/><path d="M2 12q3 4 0 7M6 12q3 4 0 7M10 12q3 4 0 7" fill="none" stroke="#222"/><use href="#pf" x="14" y="11" width="7" height="9"/></svg></button>
  <button class="fb"><svg viewBox="0 0 24 20"><circle cx="11" cy="8" r="6" fill="#eceef0" stroke="#333"/><path d="m7 12-5 6M3 8h17" stroke="#222" stroke-width="1.500"/><use href="#pf" x="14" y="11" width="7" height="9"/></svg></button>
  <button class="fb"><svg viewBox="0 0 24 20"><path d="M4 2h12v12l-6 5-6-5z" fill="#eceef0" stroke="#333" stroke-dasharray="3 1"/><path d="M7 2v13M13 2v13M4 14h12" fill="none" stroke="#333"/><use href="#pf" x="15" y="10" width="7" height="9"/></svg></button>
  <button class="fb"><svg viewBox="0 0 24 20"><path d="M2 2h15v14H2z" fill="#eceef0" stroke="#333"/><text x="4" y="14" font-family="Noto Sans, sans-serif" font-size="12" fill="#222">A</text><circle cx="13.500" cy="5.500" r="1.500" fill="none" stroke="#222"/><use href="#pf" x="15" y="10" width="7" height="9"/></svg></button>
  <button class="fb"><svg viewBox="0 0 24 20"><circle cx="9" cy="9" r="7.500" fill="#eceef0" stroke="#222"/><path d="M9 9V1.500A7.500 7.500 0 0 1 16.500 9zM9 9v7.500A7.500 7.500 0 0 1 1.500 9z" fill="#222"/><use href="#pf" x="14" y="10" width="7" height="9"/></svg></button>
  <button class="fb"><svg viewBox="0 0 24 20"><path d="M1 6h10" stroke="#222" stroke-width="2"/><path d="M11 2h8v8h-8z" fill="#4a9cc0" stroke="#1b3c50" stroke-width="1.300"/><use href="#pf" x="13" y="11" width="7" height="9"/></svg></button>
  <button class="fb"><svg viewBox="0 0 24 20"><path d="M1 6h18" stroke="#222" stroke-width="2"/><path d="M6 2h8v8H6z" fill="#4a9cc0" stroke="#1b3c50" stroke-width="1.300"/><use href="#pf" x="13" y="11" width="7" height="9"/></svg></button>
 </div>
</div>
<footer class="status"><span>SOLIDWORKS Professional 2016 x64 Edition</span><span class="state">Under Defined</span><i class="cell thin"></i><i class="cell"></i><button class="units">IPS<i class="caret up"></i></button><svg class="i18" viewBox="0 0 18 18"><path d="M1 7 6 2l10 4 1 4-5 6L2 11z" fill="#e4e6e8" stroke="#333"/><path d="m2 9 9 4 5-6" fill="none" stroke="#333"/><circle cx="8" cy="7" r="2.500" fill="none" stroke="#333"/><path d="m11 11 2-4" stroke="#333"/></svg></footer>
</div>
</body>
</html>
```
FILE: styles.css
```css
*{box-sizing:border-box}
body{margin:0;font-family:"Noto Sans","Open Sans",sans-serif;font-size:11px;line-height:13px;color:#1c1e20}
button,input{font:inherit;color:inherit;margin:0}
button{background:none;border:0;padding:0;display:flex;align-items:center}
svg{display:block;flex:none}
.defs{position:absolute;width:0;height:0}
.i14{width:14px;height:14px}
.i16{width:16px;height:16px}
.i18{width:18px;height:18px}
.i20{width:20px;height:20px}
.caret{flex:none;width:0;height:0;border:3px solid transparent;border-top:4px solid #3c3f42;border-bottom-width:0}
.caret.soft{border-top-color:#909396}
.caret.up{border-width:0 3px 4px;border-bottom:4px solid #3c3f42}
.dot{width:6px;height:6px;border:1px solid #85888b;border-radius:50%}

.app{min-height:100vh;display:flex;flex-direction:column;background:#d7dade}

/* title bar */
.titlebar{position:relative;height:31px;display:flex;align-items:stretch;background:#e6e6e6;border-bottom:1px solid #7c7f83}
.logo{position:absolute;z-index:2;left:10px;top:0;width:145px;height:35px;padding:0 0 0 5px;display:flex;align-items:center;gap:5px;background:linear-gradient(#e4e4e4,#fff 40%);border:1px solid #8a8d90;border-top:0}
.ds{width:28px;height:28px}
.logo-text{font-size:16px;line-height:20px;color:#c8322b;padding-top:4px}
.logo-text em{font-weight:300}
.menus{display:flex;align-items:center;gap:16px;padding:0 8px 0 183px;width:608px;background:#a9acaf;border-right:1px solid #8a8d90}
.menu{color:#111;text-decoration:none;white-space:nowrap}
.pin{margin-left:auto}
.quick{display:flex;align-items:center;gap:8px;padding-left:17px}
.split{width:31px;gap:7px}
.faded{color:#9a9da0}
.faded .caret{border-top-color:#a4a7aa}
.solo{width:18px}
.doc{flex:1;margin:0;padding-left:273px;align-self:center;font-size:11px;font-weight:400;color:#1c1e20}
.title-end{display:flex;align-items:center;gap:12px;padding-right:7px;color:#66696c}
.search{display:flex;align-items:center;width:201px;height:23px;padding:0 5px;background:#fafafa;border:1px solid #c2c4c6}
.search input{flex:1;min-width:0;border:0;background:#f0f1f3;padding:0 4px;height:19px;outline:0}
.search input::placeholder{color:#77797c;opacity:1}
.search .caret{margin-left:6px}
.help{gap:12px;font-size:18px;font-weight:700}
.winbtns{display:flex;align-items:center;gap:12px}
.winbtns.wide{color:#66696c;gap:11px}

/* command ribbon */
.ribbon-row{display:flex;align-items:flex-start;height:86px;background:#d7dade}
.ribbon{flex:none;height:87px;display:grid;grid-template-columns:75px 74px 38px 68px 108px 56px 75px 79px 59px 61px 51px 60px 61px 52px 61px 64px 64px;padding:5px 230px 5px 0;border-right:1px solid #7c7f83;border-bottom:1px solid #7c7f83;background:#d7dade}
.cmd{flex-direction:column;text-align:center;padding-top:13px;gap:1px;color:#1c1e20}
.cmd span{white-space:nowrap}
.cmd.faded{color:#9a9da0}
.cmd.drop{padding-top:6px}
.cmd.drop .caret{margin-top:12px}
.cmd.end{border-right:1px solid #c2c5c9}
.floatbar{display:flex;gap:7px;align-items:center;height:33px;padding:0 11px 2px 16px;border:solid #8a8d90;border-width:0 1px 1px 0;background:linear-gradient(90deg,transparent 4px,#85888b 4px 5px,transparent 5px)}

/* work area */
.work{flex:1;display:flex;min-height:0}
.side{position:relative;flex:none;width:571px;border-right:1px solid #85888b;background:#d7dade}
.tabs{display:flex;height:22px}
.tab{padding:0 10px;background:#a9acaf;border:solid #85888b;border-width:1px 1px 1px 0;color:#222}
.tab.snug{padding:0 8px 0 9px}
.tab.active{background:#d7dade;border-bottom:0;font-weight:700;padding:0 7px 0 8px}
.gripbar{display:flex;align-items:center;justify-content:center;height:16px;margin:2px 2px 0 0;border:solid #55585c;border-width:1px 0}
.mgr{display:flex;align-items:center;height:27px;margin-top:4px;border-bottom:1px solid #a4a7aa}
.mtab{justify-content:center;width:40px;height:26px;background:#a9acaf;border:solid #8a8d90;border-width:1px 1px 1px 0}
.mtab.active{background:#d7dade;border-bottom:0}
.chev{width:8px;height:12px;margin-left:auto;margin-right:7px}
.filter{display:flex;align-items:center;gap:1px;height:24px;margin:1px 4px 0;padding-left:1px;background:#efefef;border-bottom:1px solid #b4b7ba}
.filter input{flex:1;border:0;background:none;outline:0}
.tree{list-style:none;margin:1px 0 0;padding:0}
.tree li{display:flex;align-items:center;gap:5px;height:22px;padding-left:25px;white-space:nowrap}
.tree li.root{padding-left:3px;gap:4px}
.tree li.kids{padding-left:8px;gap:5px}
.tree li.kids::before{content:"";width:0;height:0;margin-right:8px;border:4px solid transparent;border-left-color:#55585c;border-right-width:0}
.splitter{position:absolute;z-index:2;right:-9px;top:437px;width:11px;height:39px;justify-content:center;background:#f4f5f6;border:1px solid #85888b;border-left:0}

/* model view */
.view{position:relative;flex:1;overflow:hidden;background:#fff;border-right:1px solid #85888b}
.scene{position:absolute;inset:0;width:100%;height:100%}
.marks{opacity:.8}
.heads{position:absolute;left:508px;top:3px;display:flex;align-items:center}
.hud{height:24px;width:25px;justify-content:center}
.hud.on{width:27px;background:#85888b;border:1px solid #55585c}
.hud.menued{width:40px;gap:6px;padding-left:3px;justify-content:flex-start}
.winbtns.inner{position:absolute;right:12px;top:9px;color:#7c7f83}
.taskpane{position:absolute;right:-1px;top:45px;width:26px;border:solid #85888b;border-width:1px 0 0 1px}
.task{width:100%;height:24px;justify-content:center;background:#a9acaf;border-bottom:1px solid #85888b}
.task.active{background:#e2e4e6}
.orient{position:absolute;left:11px;bottom:1px}
.triad{width:60px;height:68px;margin:0 0 19px 9px}
.viewname{line-height:14px;color:#111}

/* selection filters */
.filters{display:flex;align-items:center;height:34px;border-bottom:1px solid #7c7f83}
.fgroup{display:flex;align-items:center;height:28px;border-right:1px solid #85888b}
.lead{gap:8px;padding:0 6px 0 16px;width:166px;background:linear-gradient(90deg,transparent 4px,#a4a7aa 4px 5px,transparent 5px)}
.lead .last{margin-left:auto}
.kinds{padding:0 7px}
.fb{width:27px;justify-content:center}
.fb svg{width:24px;height:20px}

/* status bar */
.status{display:flex;align-items:center;height:18px;padding:0 2px 0 1px;background:#e6e6e6}
.state{margin-left:auto;padding-right:7px}
.cell{width:16px;height:16px;border-left:1px solid #c9cbcd}
.cell.thin{width:9px}
.units{width:156px;gap:27px;padding-left:48px;margin-right:9px;border-left:1px solid #c9cbcd}
```
